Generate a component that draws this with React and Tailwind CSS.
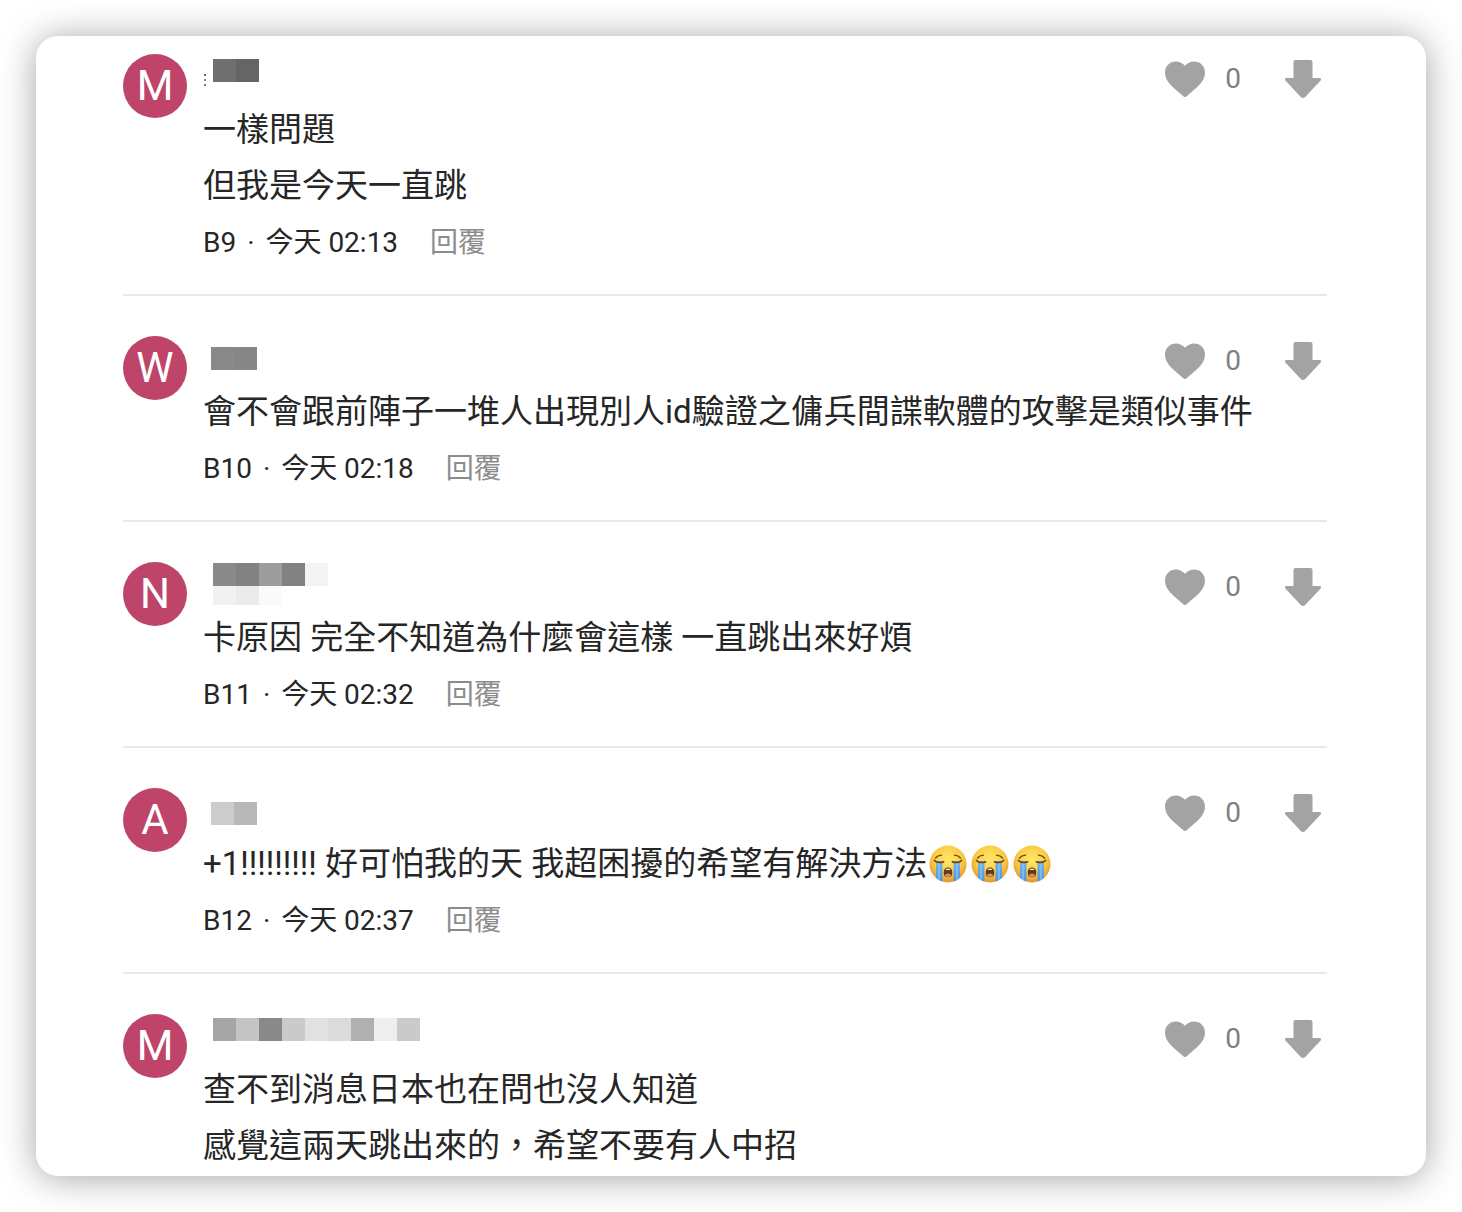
import React from "react";

const comments = [
  {
    id: "B9",
    letter: "M",
    time: "02:13",
    dots: true,
    maskClass: "ml-[10px] mt-[5px]",
    mask: [["bg-[#6f6f6f]", "bg-[#656565]"]],
    lines: ["一樣問題", "但我是今天一直跳"],
  },
  {
    id: "B10",
    letter: "W",
    time: "02:18",
    maskClass: "ml-2 mt-[11px]",
    mask: [["bg-[#898989]", "bg-[#868686]"]],
    lines: ["會不會跟前陣子一堆人出現別人id驗證之傭兵間諜軟體的攻擊是類似事件"],
  },
  {
    id: "B11",
    letter: "N",
    time: "02:32",
    maskClass: "ml-[10px] mt-px",
    mask: [
      ["bg-[#8a8a8a]", "bg-[#828282]", "bg-[#9d9d9d]", "bg-[#828282]", "bg-[#f4f4f4]"],
      ["bg-[#f1f1f1]", "bg-[#ebebeb]", "bg-[#fafafa]"],
    ],
    lines: ["卡原因 完全不知道為什麼會這樣 一直跳出來好煩"],
  },
  {
    id: "B12",
    letter: "A",
    time: "02:37",
    maskClass: "ml-2 mt-[14px]",
    mask: [["bg-[#cccccc]", "bg-[#b8b8b8]"]],
    lines: ["+1!!!!!!!!! 好可怕我的天 我超困擾的希望有解決方法"],
    sobs: 3,
  },
  {
    id: "B13",
    letter: "M",
    maskClass: "ml-[10px] mt-1",
    mask: [
      [
        "bg-[#a5a5a5]", "bg-[#c4c4c4]", "bg-[#898989]", "bg-[#cacaca]", "bg-[#e1e1e1]",
        "bg-[#dbdbdb]", "bg-[#b0b0b0]", "bg-[#eeeeee]", "bg-[#cacaca]",
      ],
    ],
    lines: ["查不到消息日本也在問也沒人知道", "感覺這兩天跳出來的，希望不要有人中招"],
  },
];

function Heart() {
  return (
    <svg viewBox="0 0 40 36" className="h-9 w-10" fill="currentColor" aria-hidden="true">
      <path d="M20 4.8C17.7 2 14.500 .4 11 .4C4.700 .4 0 5.200 0 11.700C0 20.800 8.500 26.500 18.600 35.500Q20 36.600 21.400 35.500C31.500 26.500 40 20.800 40 11.700C40 5.200 35.300 .4 29 .4C25.500 .4 22.300 2 20 4.800Z" />
    </svg>
  );
}

function DownArrow() {
  return (
    <svg viewBox="0 0 36 38" className="h-[38px] w-9" fill="currentColor" aria-hidden="true">
      <path d="M10.500 0H25.500Q27.500 0 27.500 2V18H34.500C36.200 18 36.400 19.600 35.400 20.700L20.200 36.900Q18 39 15.800 36.900L.6 20.700C-.4 19.600-.2 18 1.500 18H8.500V2Q8.500 0 10.500 0Z" />
    </svg>
  );
}

function SobFace() {
  return (
    <svg viewBox="0 0 38 38" className="mx-0.5 h-[38px] w-[38px]" role="img" aria-label="😭">
      <defs>
        <radialGradient id="face" cx="50%" cy="38%" r="62%">
          <stop offset="0" stopColor="#ffe768" />
          <stop offset=".6" stopColor="#fbce46" />
          <stop offset="1" stopColor="#e2952c" />
        </radialGradient>
        <linearGradient id="tears" x1="0" y1="0" x2="0" y2="1">
          <stop offset="0" stopColor="#74b5ea" />
          <stop offset="1" stopColor="#4a94d8" />
        </linearGradient>
        <clipPath id="disc">
          <circle cx="19" cy="19" r="18.500" />
        </clipPath>
      </defs>
      <circle cx="19" cy="19" r="18.500" fill="url(#face)" />
      <g clipPath="url(#disc)">
        <path d="M7 17Q10 15.500 13.500 17V38H7Z" fill="url(#tears)" />
        <path d="M24.500 17Q28 15.500 31 17V38H24.500Z" fill="url(#tears)" />
        <path d="M10 18V38M28 18V38" stroke="#8fc5ee" strokeWidth="1.300" />
      </g>
      <g fill="none" stroke="#6f4312" strokeLinecap="round">
        <path d="M5.500 15.500Q8 18.500 14.500 16.800M32.500 15.500Q30 18.500 23.500 16.800" strokeWidth="1.800" />
        <path d="M6.500 13Q8.500 10.500 12.500 10.200M31.500 13Q29.500 10.500 25.500 10.200" strokeWidth="1.300" />
      </g>
      <path d="M19 22.500C22 22.500 23.300 25 23.300 27.700C23.300 30.600 21.700 32.300 19 32.300S14.700 30.600 14.700 27.700C14.700 25 16 22.500 19 22.500Z" fill="#653b14" />
      <path d="M15.700 30Q19 27 22.300 30Q21.200 32 19 32T15.700 30Z" fill="#df8d72" />
      <path d="M16.800 24Q19 22.900 21.200 24V25.100H16.800Z" fill="#f4e8d6" />
    </svg>
  );
}

function MaskedName({ comment }) {
  return (
    <div className="flex h-12 items-start">
      {comment.dots && (
        <div className="-mr-1 mt-5 flex w-1 flex-col items-center gap-[3px]">
          <span className="size-0.5 bg-[#666666]" />
          <span className="size-0.5 bg-[#888888]" />
          <span className="size-0.5 bg-[#777777]" />
        </div>
      )}
      <div className={comment.maskClass}>
        {comment.mask.map((row, r) => (
          <div key={r} className="flex">
            {row.map((color, c) => (
              <span key={c} className={`${color} ${r === 0 ? "h-[23px]" : "h-[19px]"} w-[23px]`} />
            ))}
          </div>
        ))}
      </div>
    </div>
  );
}

function Comment({ comment }) {
  return (
    <li className="flex gap-4 border-b-2 border-[#e8e8e8] pb-[22px] pt-10 first:pt-[18px] last:border-b-0 last:pb-0.5">
      <div className="flex size-16 shrink-0 items-center justify-center rounded-full bg-[#bf4469] text-[42px] leading-none text-white">
        {comment.letter}
      </div>
      <div className="min-w-0 flex-1">
        <div className="flex items-start justify-between">
          <MaskedName comment={comment} />
          <div className="mr-1.5 mt-1.5 flex h-[38px] items-center text-[#a3a3a3]">
            <button type="button" aria-label="喜歡" className="flex items-center gap-5">
              <Heart />
              <span className="w-4 text-[28px] leading-none text-[#808080]">0</span>
            </button>
            <button type="button" aria-label="倒讚" className="ml-11">
              <DownArrow />
            </button>
          </div>
        </div>
        {comment.lines.map((line, i) => (
          <p key={i} className="flex items-center text-[33px] leading-[56px]">
            <span className="whitespace-pre-wrap">{line}</span>
            {Array.from({ length: comment.sobs || 0 }, (_, n) => (
              <SobFace key={n} />
            ))}
          </p>
        ))}
        {comment.time && (
          <div className="flex items-center gap-8 text-[28px] leading-[58px]">
            <span>
              {comment.id} <span className="mx-1">·</span> 今天 {comment.time}
            </span>
            <button type="button" className="text-[#8c8c8c]">回覆</button>
          </div>
        )}
      </div>
    </li>
  );
}

export default function App() {
  return (
    <div className="overflow-hidden bg-white p-9 font-[Roboto,'Noto_Sans_CJK_TC',sans-serif] text-[#262626]">
      <main className="rounded-[22px] bg-white pl-[87px] pr-[99px] shadow-[0_2px_36px_rgba(0,0,0,0.36)]">
        <ul>
          {comments.map((comment) => (
            <Comment key={comment.id} comment={comment} />
          ))}
        </ul>
      </main>
    </div>
  );
}
